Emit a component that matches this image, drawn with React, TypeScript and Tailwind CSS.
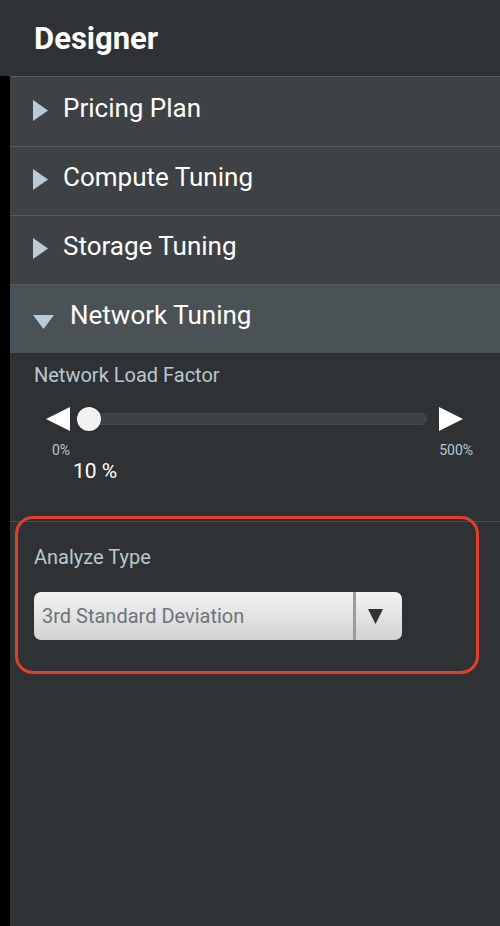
import React from "react";

const sections = ["Pricing Plan", "Compute Tuning", "Storage Tuning"];

function RightTri({ className }: { className?: string }) {
  return (
    <svg width="15" height="21" viewBox="0 0 15 21" className={className}>
      <polygon points="0,0 15,10.5 0,21" fill="#b9cbd4" />
    </svg>
  );
}

export default function App() {
  return (
    <div
      className="w-[500px] h-[926px] bg-[#2f3235] flex flex-col text-white overflow-hidden"
      style={{ fontFamily: "Roboto, 'Noto Sans', sans-serif" }}
    >
      {/* header */}
      <div className="h-[76px] shrink-0 flex items-center px-[34px]">
        <h1 className="text-[31px] font-bold leading-none">Designer</h1>
      </div>

      <div className="flex flex-1">
        <div className="w-[10px] bg-black shrink-0" />
        <div className="flex-1 flex flex-col">
          {sections.map((s, i) => (
            <div
              key={s}
              className={`${i === 0 ? "h-[70px]" : "h-[69px]"} border-t border-[#575b5e] bg-[#3e4245] flex items-center pl-[23px] pb-[8px] gap-[15px]`}
            >
              <RightTri className="mt-[5px]" />
              <span className="text-[26px] leading-none">{s}</span>
            </div>
          ))}
          <div className="h-[69px] border-t border-[#575b5e] bg-[#4b5256] flex items-center pl-[23px] pb-[9px] gap-[16px]">
            <svg width="21" height="14" viewBox="0 0 21 14" className="mt-[14px]">
              <polygon points="0,0 21,0 10.5,14" fill="#b9cbd4" />
            </svg>
            <span className="text-[26px] leading-none">Network Tuning</span>
          </div>

          {/* network load factor */}
          <div className="h-[168px] flex flex-col pl-[24px] pr-[37px]">
            <div className="mt-[11px] text-[20px] text-[#b8c8d0] leading-[22px]">Network Load Factor</div>
            <div className="flex items-center mt-[21px] pl-[12px]">
              <svg width="24" height="24" viewBox="0 0 24 24">
                <polygon points="24,0 24,24 0,12" fill="#fff" />
              </svg>
              <div className="relative flex-1 ml-[6px] mr-[12px] h-[12px] rounded-full bg-[#3e4245] border border-[#464a4d]">
                <div className="absolute left-0 top-1/2 -translate-y-1/2 w-[24px] h-[24px] rounded-full bg-[#f2f2f2] shadow-[0_0_2px_rgba(0,0,0,0.5)]" />
              </div>
              <svg width="24" height="24" viewBox="0 0 24 24">
                <polygon points="0,0 24,12 0,24" fill="#fff" />
              </svg>
            </div>
            <div className="flex justify-between mt-[11px] pl-[18px] text-[14px] text-[#b8c8d0] leading-[16px]">
              <span>0%</span>
              <span className="-mr-[10px]">500%</span>
            </div>
            <div className="pl-[39px] text-[21px] leading-[22px] mt-[2px]">10 %</div>
          </div>

          {/* analyze type */}
          <div className="relative border-t border-[#4a4e51] pt-[24px] pl-[24px]">
            <div className="absolute left-[5px] top-[-6px] w-[464px] h-[158px] rounded-[18px] border-[3px] border-[#e0402a] pointer-events-none" />
            <div className="text-[20px] text-[#b8c8d0] leading-[22px]">Analyze Type</div>
            <div className="mt-[24px] w-[368px] h-[48px] rounded-[7px] bg-gradient-to-b from-[#f3f3f3] to-[#d3d3d3] flex items-stretch">
              <div className="flex-1 flex items-center pl-[8px] text-[20px] text-[#6b7479]">3rd Standard Deviation</div>
              <div className="w-[3px] bg-[#9c9c9c]" />
              <div className="w-[46px] flex items-center pl-[12px]">
                <svg width="15" height="15" viewBox="0 0 15 15">
                  <polygon points="0,0 15,0 7.5,15" fill="#2f3133" />
                </svg>
              </div>
            </div>
          </div>
        </div>
      </div>
    </div>
  );
}
